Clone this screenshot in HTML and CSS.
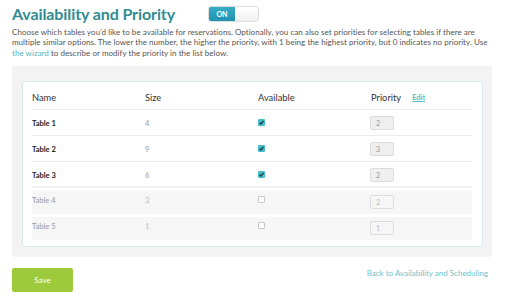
FILE: index.html
```html
<!DOCTYPE html>
<html>
<head>
<meta charset="utf-8">
<link rel="stylesheet" href="styles.css">
</head>
<body>
<div class="page">
  <div class="title-row">
    <h1 class="title">Availability and Priority</h1>
    <div class="toggle"><span class="toggle-on">ON</span><span class="toggle-off"></span></div>
  </div>
  <p class="intro">Choose which tables you'd like to be available for reservations. Optionally, you can also set priorities for selecting tables if there are multiple similar options. The lower the number, the higher the priority, with 1 being the highest priority, but 0 indicates no priority. Use <a class="link" href="#">the wizard</a> to describe or modify the priority in the list below.</p>
  <div class="panel">
    <div class="card">
      <div class="row head">
        <div>Name</div>
        <div>Size</div>
        <div>Available</div>
        <div class="prio-head">Priority <a class="edit" href="#">Edit</a></div>
      </div>
      <div class="row">
        <div class="name">Table 1</div>
        <div class="size">4</div>
        <div><span class="cb checked"><svg viewBox="0 0 7 7" width="7" height="7"><path d="M1.6 3.7 L2.9 5 L5.5 1.8" fill="none" stroke="#1d3a40" stroke-width="1.3"/></svg></span></div>
        <div><span class="prio">2</span></div>
      </div>
      <div class="row">
        <div class="name">Table 2</div>
        <div class="size">9</div>
        <div><span class="cb checked"><svg viewBox="0 0 7 7" width="7" height="7"><path d="M1.6 3.7 L2.9 5 L5.5 1.8" fill="none" stroke="#1d3a40" stroke-width="1.3"/></svg></span></div>
        <div><span class="prio">3</span></div>
      </div>
      <div class="row last">
        <div class="name">Table 3</div>
        <div class="size">6</div>
        <div><span class="cb checked"><svg viewBox="0 0 7 7" width="7" height="7"><path d="M1.6 3.7 L2.9 5 L5.5 1.8" fill="none" stroke="#1d3a40" stroke-width="1.3"/></svg></span></div>
        <div><span class="prio">2</span></div>
      </div>
      <div class="row off">
        <div class="name">Table 4</div>
        <div class="size">3</div>
        <div><span class="cb"></span></div>
        <div><span class="prio">2</span></div>
      </div>
      <div class="row off">
        <div class="name">Table 5</div>
        <div class="size">1</div>
        <div><span class="cb"></span></div>
        <div><span class="prio">1</span></div>
      </div>
    </div>
  </div>
  <div class="footer">
    <button class="save">Save</button>
    <a class="back" href="#">Back to Availability and Scheduling</a>
  </div>
</div>
</body>
</html>
```
FILE: styles.css
```css
* { box-sizing: border-box; }
body {
  margin: 0;
  background: #fff;
  font-family: "Lato", "Open Sans", sans-serif;
  color: #555;
}
.page {
  width: 512px;
  padding: 0 20px 0 12px;
}
.title-row {
  display: flex;
  align-items: center;
  height: 27px;
}
.title {
  margin: 0;
  font-size: 16px;
  font-weight: 700;
  color: #318c91;
  width: 196px;
  letter-spacing: -0.1px;
}
.toggle {
  display: flex;
  width: 51px;
  height: 16px;
  border-radius: 3px;
  overflow: hidden;
  border: 1px solid #ddd;
}
.toggle-on {
  width: 26px;
  background: linear-gradient(#37aac6, #1f93b2);
  color: #fff;
  font-size: 7px;
  font-weight: 700;
  display: flex;
  align-items: center;
  justify-content: center;
}
.toggle-off {
  flex: 1;
  background: linear-gradient(#fff, #f0f0f0);
}
.intro {
  margin: 0;
  font-size: 8px;
  line-height: 10.4px;
  letter-spacing: 0.04px;
  color: #555;
}
.link { color: #4fb8c3; text-decoration: none; }
.panel {
  margin-top: 8px;
  background: #f3f3f3;
  border-radius: 3px;
  padding: 15px 9px 10px 10px;
}
.card {
  background: #fff;
  border: 1px solid #d6e9ee;
  border-radius: 3px;
  padding: 7px 10px 6px 9px;
}
.row {
  display: grid;
  grid-template-columns: 113px 113px 113px 1fr;
  height: 26px;
  align-items: start;
  padding-top: 6px;
  border-bottom: 1px solid #ececec;
  font-size: 7.5px;
}
.row.head {
  height: 21px;
  padding-top: 3px;
  font-size: 9.3px;
  color: #333;
}
.row.last { border-bottom: 2px solid #efefef; margin-bottom: 3px; }
.row.off {
  background: #f6f6f6;
  border-bottom: none;
  height: 23px;
  margin-bottom: 3px;
  padding-top: 4px;
}
.row.off:last-child { margin-bottom: 0; }
.name { font-weight: 700; color: #222; padding-top: 3px; }
.size { color: #999; padding-top: 3px; }
.row.off .name { font-weight: 400; color: #999; padding-top: 1px; }
.row.off .size { color: #bbb; padding-top: 1px; }
.prio-head { display: flex; align-items: center; gap: 11px; }
.edit {
  color: #58bcc6;
  font-size: 7.5px;
  font-weight: 700;
  text-decoration: underline;
}
.cb {
  display: inline-block;
  width: 7px;
  height: 7px;
  border: 1px solid #c8c8c8;
  border-radius: 1px;
  background: #fff;
  margin-top: 3px;
  vertical-align: top;
}
.cb.checked {
  background: #45bccb;
  border: none;
}
.cb svg { display: block; }
.row.off .cb { margin-top: 1px; }
.prio {
  display: inline-block;
  width: 24px;
  height: 14px;
  background: #efefef;
  border: 1px solid #dcdcdc;
  border-radius: 2px;
  font-size: 7px;
  color: #999;
  padding-left: 5px;
  line-height: 12px;
  margin-left: -1px;
}
.row.off .prio { background: #f6f6f6; color: #bbb; }
.footer {
  display: flex;
  justify-content: space-between;
  align-items: flex-start;
  margin-top: 11px;
}
.save {
  width: 61px;
  height: 24px;
  background: #9dca3b;
  border: none;
  border-radius: 2px;
  color: #fff;
  font-family: inherit;
  font-size: 8px;
  padding: 0;
}
.back {
  color: #6ec4cc;
  font-size: 8px;
  text-decoration: none;
  margin-right: 4px;
}
```
